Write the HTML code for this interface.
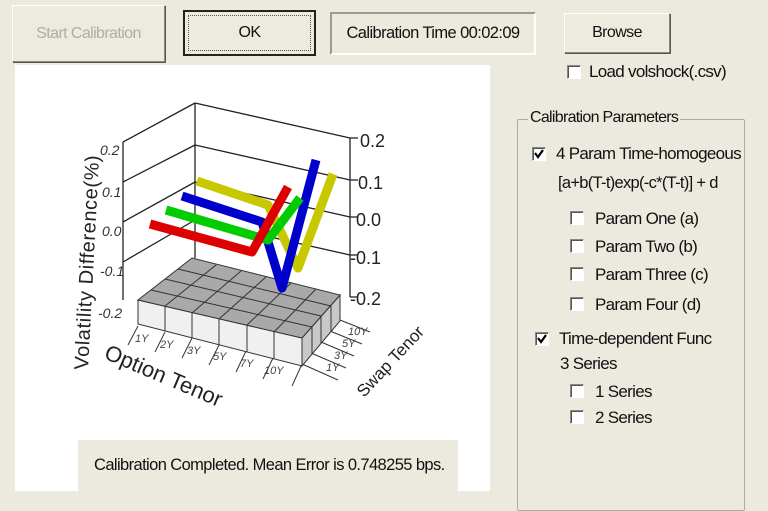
<!DOCTYPE html>
<html><head><meta charset="utf-8"><style>
body{margin:0;width:768px;height:498px;background:#ECE9DF;font-family:"Liberation Sans",sans-serif;font-size:16px;color:#111;position:relative;overflow:hidden}
.a{position:absolute}
.btn{position:absolute;background:#EDEAE0;border:1px solid;border-color:#fff #888 #888 #fff;box-shadow:1px 1px 0 #555;display:flex;align-items:center;justify-content:center;font-size:16px;letter-spacing:-0.6px}
.cb{position:absolute;width:12px;height:12px;background:#fff;border:1px solid;border-color:#888 #fff #fff #888;box-shadow:inset 1px 1px 0 #555}
.t{position:absolute;font-size:17px;letter-spacing:-0.7px;white-space:nowrap}
</style></head><body>
<div class="btn" style="left:12px;top:5px;width:151px;height:55px;color:#b0ada4">Start Calibration</div>
<div class="btn" style="left:183px;top:10px;width:129px;height:42px;border:2px solid #222;box-shadow:none"><div style="position:absolute;inset:3px;border:1px dotted #555"></div>OK</div>
<div class="a" style="left:330px;top:12px;width:202px;height:39px;border:2px solid;border-color:#999 #fff #fff #999;display:flex;align-items:center;justify-content:center;font-size:16.5px;letter-spacing:-0.6px">Calibration Time 00:02:09</div>
<div class="btn" style="left:564px;top:13px;width:104px;height:38px">Browse</div>
<div class="cb" style="left:567px;top:65px"></div>
<div class="t" style="left:589px;top:62px">Load volshock(.csv)</div>

<div class="a" style="left:15px;top:65px;width:475px;height:426px;background:#fff"></div>
<svg class="a" style="left:0;top:0" width="500" height="498" viewBox="0 0 500 498">
<g stroke="#222" stroke-width="1.3" fill="none">
<line x1="195" y1="103" x2="195" y2="258"/>
<line x1="123" y1="142" x2="123" y2="300"/>
<line x1="350" y1="138" x2="350" y2="297"/>
<line x1="195" y1="103" x2="350" y2="138"/>
<line x1="123" y1="142" x2="195" y2="103"/>
<line x1="123" y1="182" x2="195" y2="145"/><line x1="195" y1="145" x2="350" y2="180"/>
<line x1="123" y1="222" x2="195" y2="182"/><line x1="195" y1="182" x2="350" y2="217"/>
<line x1="123" y1="262" x2="195" y2="220"/><line x1="195" y1="220" x2="350" y2="255"/>
<line x1="350" y1="138" x2="358" y2="138"/><line x1="350" y1="180" x2="358" y2="180"/><line x1="350" y1="217" x2="358" y2="217"/><line x1="350" y1="255" x2="358" y2="255"/><line x1="350" y1="297" x2="358" y2="297"/>
</g>
<g fill="#222" font-size="18" font-family="Liberation Sans">
<text x="360" y="147">0.2</text><text x="358" y="189">0.1</text><text x="356" y="226">0.0</text><text x="350" y="264">-0.1</text><text x="350" y="305">-0.2</text>
</g>
<g fill="#333" font-size="14" font-style="italic" font-family="Liberation Sans">
<text x="100" y="155">0.2</text><text x="102" y="197">0.1</text><text x="102" y="236">0.0</text><text x="100" y="276">-0.1</text><text x="98" y="318">-0.2</text>
</g>
<text transform="translate(88,370) rotate(-87)" font-size="20" letter-spacing="0.6" fill="#222" font-family="Liberation Sans">Volatility Difference(%)</text>
<text transform="translate(103,358) rotate(23)" font-size="22" fill="#222" font-family="Liberation Sans">Option Tenor</text>
<text transform="translate(364,398) rotate(-47)" font-size="17" fill="#222" font-family="Liberation Sans">Swap Tenor</text>
<g stroke="#333" stroke-width="1">
<line x1="138" y1="326" x2="128" y2="345"/><line x1="165" y1="332" x2="155" y2="352"/><line x1="192" y1="338" x2="182" y2="358"/><line x1="219" y1="345" x2="209" y2="365"/><line x1="246" y1="351" x2="236" y2="372"/><line x1="273" y1="358" x2="263" y2="379"/><line x1="302" y1="364" x2="292" y2="386"/>
<line x1="340" y1="320" x2="370" y2="332"/><line x1="330" y1="331" x2="362" y2="344"/><line x1="321" y1="342" x2="354" y2="356"/><line x1="311" y1="353" x2="346" y2="368"/><line x1="302" y1="364" x2="338" y2="380"/>
</g>
<g font-size="11" fill="#444" font-style="italic" font-family="Liberation Sans">
<text x="135" y="342">1Y</text><text x="160" y="348">2Y</text><text x="187" y="354">3Y</text><text x="213" y="360">5Y</text><text x="240" y="367">7Y</text><text x="264" y="374">10Y</text>
<text x="348" y="335">10Y</text><text x="342" y="347">5Y</text><text x="334" y="359">3Y</text><text x="326" y="371">1Y</text>
</g>
<polygon points="138,300 302,338 302,366 138,324" fill="#f0f0f0" stroke="#333"/>
<polygon points="302,338 340,295 340,321 302,366" fill="#c8c8c8" stroke="#333"/>
<polygon points="138,300 192,258 340,295 302,338" fill="#a9a9a9" stroke="#333"/>
<g stroke="#333" stroke-width="1">
<line x1="165" y1="306" x2="165" y2="331"/><line x1="192" y1="313" x2="192" y2="338"/><line x1="219" y1="319" x2="219" y2="345"/><line x1="247" y1="325" x2="247" y2="352"/><line x1="274" y1="332" x2="274" y2="359"/>
<line x1="165" y1="306" x2="216" y2="265"/><line x1="192" y1="313" x2="241" y2="271"/><line x1="219" y1="319" x2="266" y2="277"/><line x1="247" y1="325" x2="291" y2="283"/><line x1="274" y1="332" x2="316" y2="289"/>
<line x1="151" y1="290" x2="312" y2="327"/><line x1="165" y1="279" x2="321" y2="316"/><line x1="178" y1="269" x2="331" y2="306"/>
<line x1="312" y1="327" x2="312" y2="354"/><line x1="321" y1="316" x2="321" y2="343"/><line x1="331" y1="306" x2="331" y2="332"/>
</g>
<g fill="none" stroke-width="9" stroke-linejoin="round">
<polyline points="197,181 268,205 298,268 333,174" stroke="#c8c800"/>
<polyline points="182,196 262,222 282,288 316,160" stroke="#0000cc"/>
<polyline points="166,210 268,240 300,198" stroke="#00cc00"/>
<polyline points="150,224 252,252 288,187" stroke="#dd0000"/>
</g>
</svg>
<div class="a" style="left:78px;top:440px;width:380px;height:51px;background:#ECE9DF;display:flex;align-items:center;padding-left:16px;box-sizing:border-box;font-size:16.5px;letter-spacing:-0.6px">Calibration Completed. Mean Error is 0.748255 bps.</div>

<div class="a" style="left:517px;top:119px;width:226px;height:390px;border:1px solid #aaa;border-radius:2px"></div>
<div class="t" style="left:528px;top:109px;background:#ECE9DF;padding:0 2px;font-size:16px">Calibration Parameters</div>
<div class="cb" style="left:532px;top:147px"><svg width="12" height="12" style="position:absolute;left:0;top:0"><path d="M2 5 L5 9 L10 2" stroke="#000" stroke-width="2.2" fill="none"/></svg></div>
<div class="t" style="left:556px;top:144px">4 Param Time-homogeous</div>
<div class="t" style="left:558px;top:174px;font-size:16.5px">[a+b(T-t)exp(-c*(T-t)] + d</div>
<div class="cb" style="left:570px;top:211px"></div><div class="t" style="left:595px;top:209px">Param One (a)</div>
<div class="cb" style="left:570px;top:239px"></div><div class="t" style="left:595px;top:237px">Param Two (b)</div>
<div class="cb" style="left:570px;top:267px"></div><div class="t" style="left:595px;top:265px">Param Three (c)</div>
<div class="cb" style="left:570px;top:297px"></div><div class="t" style="left:595px;top:295px">Param Four (d)</div>
<div class="cb" style="left:535px;top:332px"><svg width="12" height="12" style="position:absolute;left:0;top:0"><path d="M2 5 L5 9 L10 2" stroke="#000" stroke-width="2.2" fill="none"/></svg></div>
<div class="t" style="left:559px;top:329px">Time-dependent Func</div>
<div class="t" style="left:560px;top:354px">3 Series</div>
<div class="cb" style="left:570px;top:384px"></div><div class="t" style="left:595px;top:382px">1 Series</div>
<div class="cb" style="left:570px;top:410px"></div><div class="t" style="left:595px;top:408px">2 Series</div>
</body></html>
